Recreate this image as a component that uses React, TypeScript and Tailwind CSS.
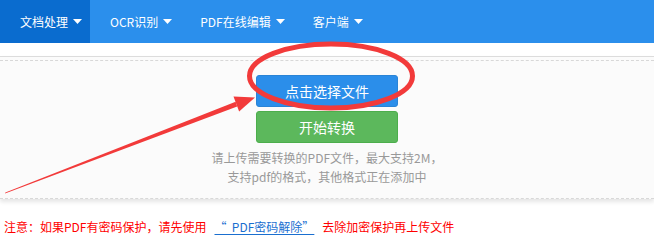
const navItems = ["文档处理", "OCR识别", "PDF在线编辑", "客户端"];

const Caret = () => (
  <svg width="9" height="5" viewBox="0 0 9 5" className="ml-[5px]">
    <path d="M0 0 L9 0 L4.5 5 Z" fill="#fff" />
  </svg>
);

const Annotation = () => (
  <svg
    className="absolute left-0 top-0 pointer-events-none"
    width="654"
    height="240"
    viewBox="0 0 654 240"
  >
    <ellipse
      cx="331"
      cy="76"
      rx="81.5"
      ry="32"
      fill="none"
      stroke="#f23a3a"
      strokeWidth="5"
    />
    <polygon
      points="5,193.4 5.4,192.6 235.6,101.8 237.2,106.4"
      fill="#f23a3a"
    />
    <polygon points="255,97.5 233.5,96.6 239.1,111.6" fill="#f23a3a" />
  </svg>
);

const App = () => {
  return (
    <div className="relative w-[654px] h-[240px] overflow-hidden bg-white font-['Microsoft_YaHei','Noto_Sans_CJK_SC',sans-serif]">
      {/* nav */}
      <div className="flex h-[43px] bg-[#2b8fec]">
        {navItems.map((item, i) => (
          <div
            key={item}
            className={`flex items-center pl-[20px] pr-[8px] text-[12px] text-white ${
              i === 0 ? "bg-[#0a6ccf]" : ""
            }`}
          >
            <span>{item}</span>
            <Caret />
          </div>
        ))}
      </div>

      {/* upload box */}
      <div className="mt-[13px] border-t border-[#dcdcdc] bg-[#fbfbfb] pt-[3px] shadow-[0_3px_4px_rgba(0,0,0,0.1)]">
        <div className="flex flex-col items-center border-y border-dashed border-[#d8d8d8] pt-[14px] pb-[12px]">
          <button className="h-[32px] w-[142px] rounded-[3px] border border-[#2a84d6] bg-[#2b8eea] text-[14px] text-white">
            点击选择文件
          </button>
          <button className="mt-[4px] h-[32px] w-[142px] rounded-[3px] border border-[#4cae4c] bg-[#5cb85c] text-[14px] text-white">
            开始转换
          </button>
          <p className="mt-[5px] text-center text-[12px] leading-[19px] text-[#999]">
            请上传需要转换的PDF文件，最大支持2M，
            <br />
            支持pdf的格式，其他格式正在添加中
          </p>
        </div>
      </div>

      {/* note */}
      <div className="mt-[18px] pl-[4px] text-[12px] leading-[20px] text-[#f00]">
        注意：如果PDF有密码保护，请先使用
        <a className="mx-[6px] px-[2px] text-[#1a6fd0] underline underline-offset-2">
          “&nbsp;&nbsp;PDF密码解除”
        </a>
        去除加密保护再上传文件
      </div>

      <Annotation />
    </div>
  );
};

export default App;
